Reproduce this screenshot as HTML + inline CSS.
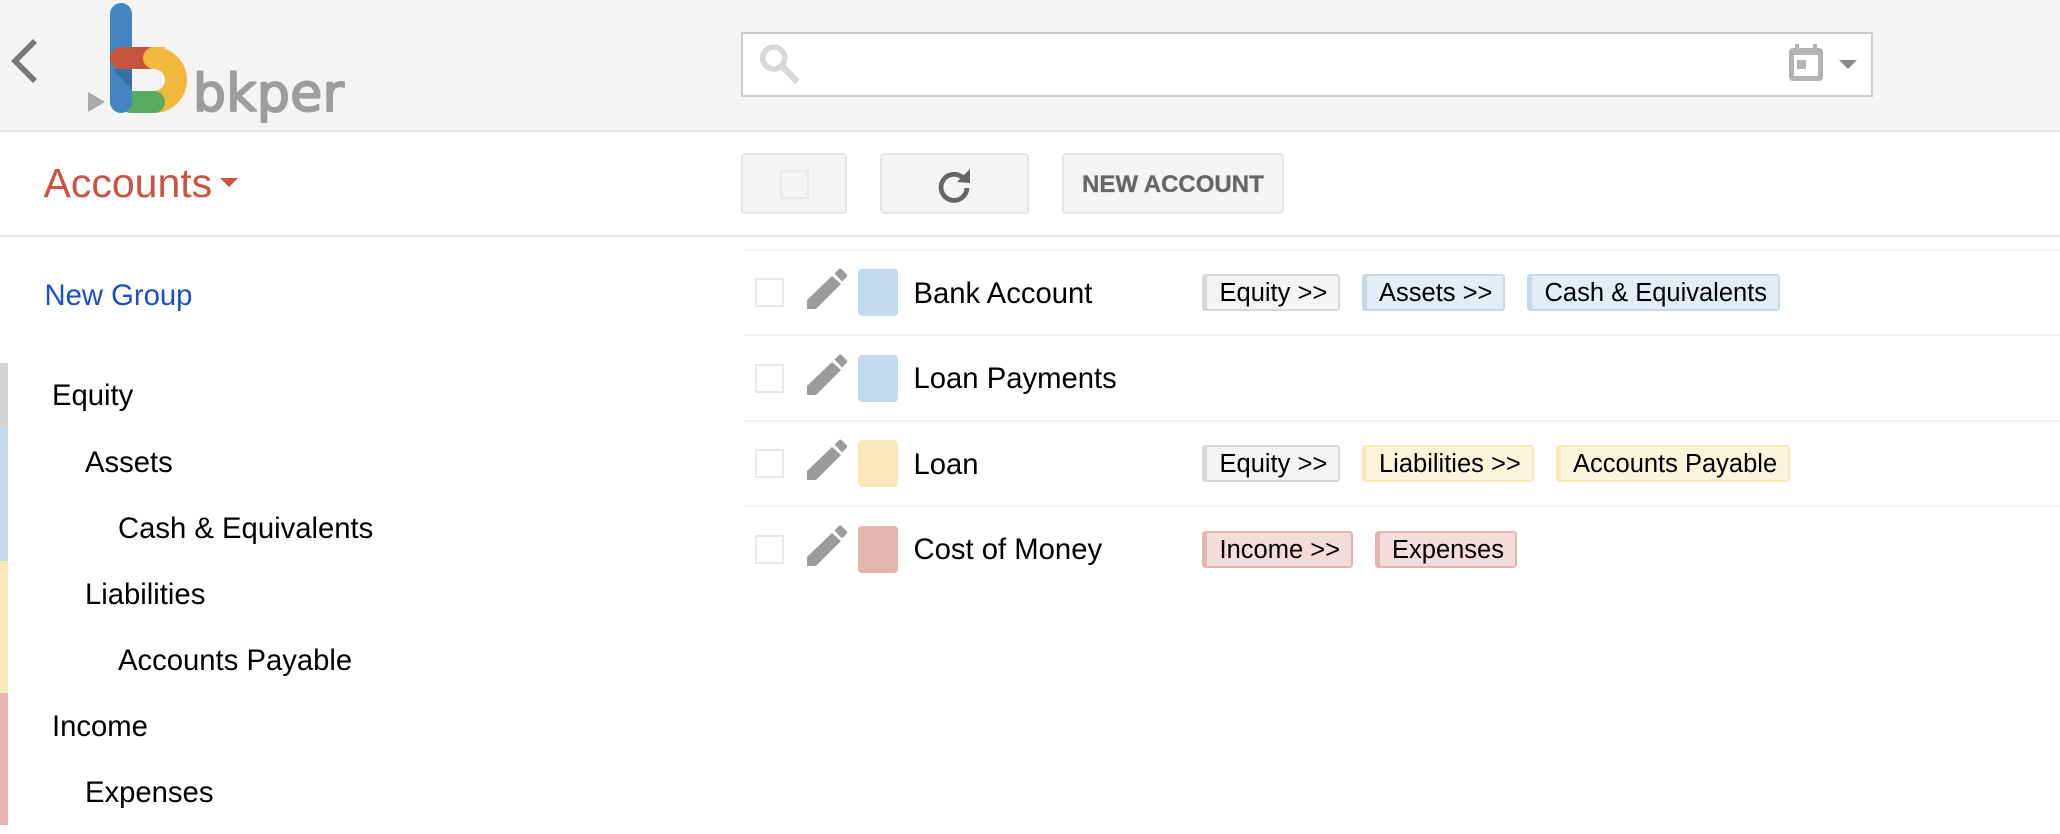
<!DOCTYPE html>
<html><head><meta charset="utf-8"><title>bkper Accounts</title>
<style>
html,body{margin:0;padding:0;background:#fff;width:2060px;height:834px;overflow:hidden}
svg{display:block}
text{font-family:"Liberation Sans",sans-serif}
.t{font-size:29.25px;fill:#000}
.g{font-size:25.5px;fill:#000}
</style></head><body>
<svg width="2060" height="834" viewBox="0 0 2060 834" xmlns="http://www.w3.org/2000/svg">
<rect width="2060" height="834" fill="#fff"/>
<rect width="2060" height="130" fill="#f4f4f4"/>
<rect y="130" width="2060" height="2" fill="#e4e4e4"/>
<rect y="235" width="2060" height="2" fill="#e6e6e6"/>

<!-- back -->
<path d="M35 41 L15 61 L35 81" fill="none" stroke="#777" stroke-width="5.500"/>

<!-- logo -->
<path d="M88 92 L105 102 L88 112 Z" fill="#a9a9a9"/>
<path d="M154 58 A22 22 0 0 1 154 102" fill="none" stroke="#f0b83c" stroke-width="22"/>
<rect x="120" y="91" width="45" height="22" rx="11" fill="#5aab62"/>
<rect x="110" y="3" width="22" height="110" rx="11" fill="#4285c0"/>
<path d="M113 69 L132 69 L132 90 Z" fill="#3b6f9e"/>
<rect x="110" y="47" width="50" height="22" rx="11" fill="#c8533e"/>
<path d="M154 47 A11 11 0 0 0 154 69 L160 69 L165 47 Z" fill="#f0b83c"/>
<text x="193" y="111" style="font-family:'DejaVu Sans',sans-serif;font-size:52px" fill="#9d9d9d" stroke="#9d9d9d" stroke-width="2" stroke-linejoin="round" textLength="151">bkper</text>

<!-- search -->
<rect x="742" y="33" width="1130" height="63" fill="#fff" stroke="#ccc" stroke-width="2"/>
<circle cx="773.700" cy="58" r="11" fill="none" stroke="#d8d8d8" stroke-width="5.600"/>
<path d="M783 67 L797.500 82" stroke="#d8d8d8" stroke-width="6.500" fill="none"/>
<rect x="1789" y="48" width="34" height="33" rx="4" fill="#b3b3b3"/>
<rect x="1795" y="44" width="4" height="6" fill="#b3b3b3"/>
<rect x="1813" y="44" width="4" height="6" fill="#b3b3b3"/>
<rect x="1794" y="55" width="24" height="21" fill="#fff"/>
<rect x="1797" y="60" width="9" height="9" fill="#b3b3b3"/>
<path d="M1839 60 L1857 60 L1848 69 Z" fill="#888"/>

<!-- heading -->
<text x="43.500" y="197" font-size="41" fill="#cb5340">Accounts</text>
<path d="M220 178 L238 178 L229 187 Z" fill="#cb5340"/>

<!-- toolbar -->
<rect x="742" y="154" width="104" height="59" rx="3" fill="#f4f4f4" stroke="#e6e6e6" stroke-width="2"/>
<rect x="781" y="171" width="27" height="27" fill="none" stroke="#e9e9e9" stroke-width="2.500"/>
<rect x="881" y="154" width="147" height="59" rx="3" fill="#f4f4f4" stroke="#e6e6e6" stroke-width="2"/>
<path d="M962.500 177.500 A13 13 0 1 0 967 188" fill="none" stroke="#666" stroke-width="4.800"/>
<path d="M970 169 L970 183 L957 182 Z" fill="#666"/>
<rect x="1063" y="154" width="220" height="59" rx="3" fill="#f4f4f4" stroke="#e6e6e6" stroke-width="2"/>
<text x="1082" y="192" font-size="24" font-weight="700" fill="#666" stroke="#666" stroke-width="0.300">NEW ACCOUNT</text>

<!-- sidebar -->
<text x="44.500" y="305" font-size="29.250" fill="#1c4fc4">New Group</text>
<rect y="363" width="8" height="66" fill="#d4d4d4"/>
<rect y="429" width="8" height="132" fill="#c4d9ea"/>
<rect y="561" width="8" height="132" fill="#f9e9b9"/>
<rect y="693" width="8" height="132" fill="#e4b5af"/>
<text class="t" x="52" y="405">Equity</text>
<text class="t" x="85" y="472">Assets</text>
<text class="t" x="118" y="538">Cash &amp; Equivalents</text>
<text class="t" x="85" y="604">Liabilities</text>
<text class="t" x="118" y="670">Accounts Payable</text>
<text class="t" x="52" y="736">Income</text>
<text class="t" x="85" y="802">Expenses</text>

<!-- row lines -->
<rect x="744" y="249" width="1316" height="2" fill="#f4f4f4"/>
<rect x="744" y="334" width="1316" height="2" fill="#f4f4f4"/>
<rect x="744" y="420" width="1316" height="2" fill="#f4f4f4"/>
<rect x="744" y="505" width="1316" height="2" fill="#f4f4f4"/>

<defs>
<path id="pen" d="M0 31 L25 7 L34 15 L9 40 L0 40 Z M27.500 4.500 L32 0 Q33 -1 34.500 0 L39.500 5 Q41 6.500 39.500 8 L35 12.500 Z" fill="#9b9b9b"/>
</defs>

<!-- row 1 -->
<rect x="756" y="279" width="27" height="27" fill="#fff" stroke="#e9e9e9" stroke-width="2"/>
<use href="#pen" x="807" y="269"/>
<rect x="858" y="269" width="40" height="47" rx="4" fill="#c4d9ea"/>
<text class="t" x="913.500" y="303">Bank Account</text>

<rect x="1202" y="274" width="138" height="37" rx="3.500" fill="#d8d8d8"/>
<rect x="1207" y="276" width="131" height="33" rx="1" fill="#f4f4f4"/>
<text class="g" x="1219.500" y="301">Equity &gt;&gt;</text>
<rect x="1362" y="274" width="143" height="37" rx="3.500" fill="#c4d9ea"/>
<rect x="1367" y="276" width="136" height="33" rx="1" fill="#e2edf5"/>
<text class="g" x="1379" y="301">Assets &gt;&gt;</text>
<rect x="1527" y="274" width="253" height="37" rx="3.500" fill="#c4d9ea"/>
<rect x="1532" y="276" width="246" height="33" rx="1" fill="#e2edf5"/>
<text class="g" x="1544.500" y="301">Cash &amp; Equivalents</text>

<!-- row 2 -->
<rect x="756" y="365" width="27" height="27" fill="#fff" stroke="#e9e9e9" stroke-width="2"/>
<use href="#pen" x="807" y="355"/>
<rect x="858" y="355" width="40" height="47" rx="4" fill="#c4d9ea"/>
<text class="t" x="913.500" y="388">Loan Payments</text>

<!-- row 3 -->
<rect x="756" y="450" width="27" height="27" fill="#fff" stroke="#e9e9e9" stroke-width="2"/>
<use href="#pen" x="807" y="440"/>
<rect x="858" y="440" width="40" height="47" rx="4" fill="#f9e9b9"/>
<text class="t" x="913.500" y="474">Loan</text>

<rect x="1202" y="445" width="138" height="37" rx="3.500" fill="#d8d8d8"/>
<rect x="1207" y="447" width="131" height="33" rx="1" fill="#f4f4f4"/>
<text class="g" x="1219.500" y="472">Equity &gt;&gt;</text>
<rect x="1362" y="445" width="172" height="37" rx="3.500" fill="#f9e9b9"/>
<rect x="1367" y="447" width="165" height="33" rx="1" fill="#fbf3da"/>
<text class="g" x="1379" y="472">Liabilities &gt;&gt;</text>
<rect x="1556" y="445" width="234" height="37" rx="3.500" fill="#f9e9b9"/>
<rect x="1561" y="447" width="227" height="33" rx="1" fill="#fbf3da"/>
<text class="g" x="1573" y="472">Accounts Payable</text>

<!-- row 4 -->
<rect x="756" y="536" width="27" height="27" fill="#fff" stroke="#e9e9e9" stroke-width="2"/>
<use href="#pen" x="807" y="526"/>
<rect x="858" y="526" width="40" height="47" rx="4" fill="#e4b5af"/>
<text class="t" x="913.500" y="559">Cost of Money</text>

<rect x="1202" y="531" width="151" height="37" rx="3.500" fill="#e4b5af"/>
<rect x="1207" y="533" width="144" height="33" rx="1" fill="#f3dcda"/>
<text class="g" x="1219.500" y="558">Income &gt;&gt;</text>
<rect x="1375" y="531" width="142" height="37" rx="3.500" fill="#e4b5af"/>
<rect x="1380" y="533" width="135" height="33" rx="1" fill="#f3dcda"/>
<text class="g" x="1392" y="558">Expenses</text>
</svg>
</body></html>
